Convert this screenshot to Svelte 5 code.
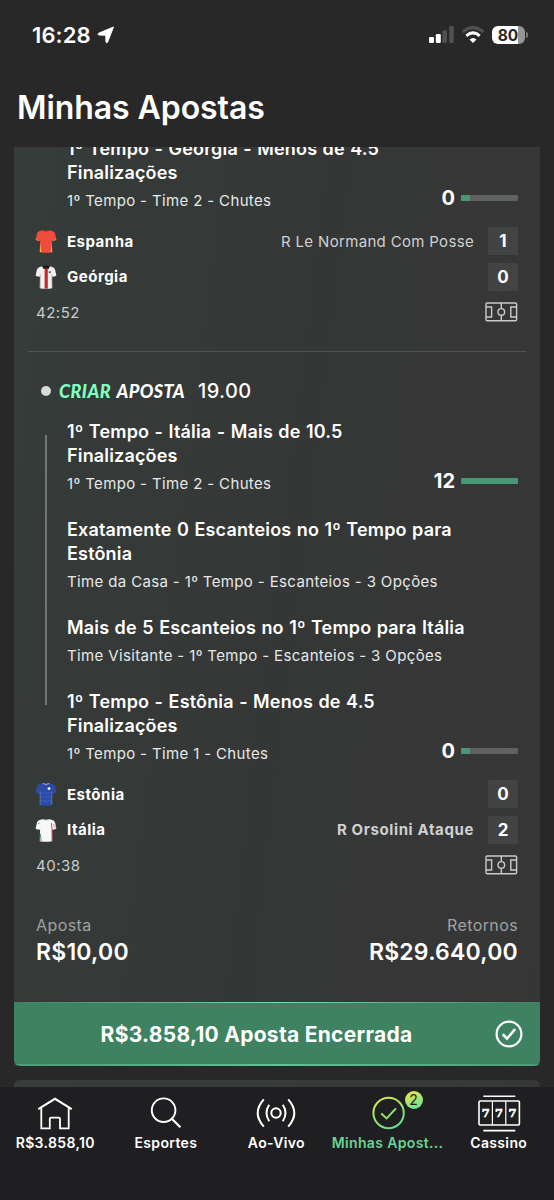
<script lang="ts">
	type Selection = { title: string[]; market: string; count?: number; progress?: number };
	type Team = { name: string; kit: string; score: number; play?: string; strong?: boolean };

	const georgia: Selection = {
		title: ['1º Tempo - Geórgia - Menos de 4.5', 'Finalizações'],
		market: '1º Tempo - Time 2 - Chutes',
		count: 0,
		progress: 15
	};

	const selections: Selection[] = [
		{
			title: ['1º Tempo - Itália - Mais de 10.5', 'Finalizações'],
			market: '1º Tempo - Time 2 - Chutes',
			count: 12,
			progress: 100
		},
		{
			title: ['Exatamente 0 Escanteios no 1º Tempo para', 'Estônia'],
			market: 'Time da Casa - 1º Tempo - Escanteios - 3 Opções'
		},
		{
			title: ['Mais de 5 Escanteios no 1º Tempo para Itália'],
			market: 'Time Visitante - 1º Tempo - Escanteios - 3 Opções'
		},
		{
			title: ['1º Tempo - Estônia - Menos de 4.5', 'Finalizações'],
			market: '1º Tempo - Time 1 - Chutes',
			count: 0,
			progress: 15
		}
	];

	const firstMatch: Team[] = [
		{ name: 'Espanha', kit: 'spain', score: 1, play: 'R Le Normand Com Posse' },
		{ name: 'Geórgia', kit: 'georgia', score: 0 }
	];

	const secondMatch: Team[] = [
		{ name: 'Estônia', kit: 'estonia', score: 0 },
		{ name: 'Itália', kit: 'italy', score: 2, play: 'R Orsolini Ataque', strong: true }
	];

	const kitColors: Record<string, string> = {
		spain: '#ef4c3b',
		georgia: '#f3f1f0',
		estonia: '#2c4ba6',
		italy: '#f8f8f8'
	};

	const tabs = [
		{ id: 'home', label: 'R$3.858,10' },
		{ id: 'sports', label: 'Esportes' },
		{ id: 'live', label: 'Ao-Vivo' },
		{ id: 'bets', label: 'Minhas Apost...' },
		{ id: 'casino', label: 'Cassino' }
	];
</script>

{#snippet selection(item: Selection)}
	<div class="selection">
		<div class="selection__title">
			{#each item.title as line}
				<div>{line}</div>
			{/each}
		</div>
		<div class="selection__row">
			<span class="selection__market">{item.market}</span>
			{#if item.count !== undefined}
				<div class="stat">
					<span class="stat__count">{item.count}</span>
					<div class="stat__track">
						<div class="stat__fill" style="width: {item.progress}%"></div>
					</div>
				</div>
			{/if}
		</div>
	</div>
{/snippet}

{#snippet shirt(kit: string)}
	<svg class="shirt" width="22" height="24" viewBox="0 0 22 24">
		<path
			d="M7.2 1.2Q11 2.4 14.8 1.2L18 2.3Q19.6 3 20.1 4.8L21.4 10.8L17.6 12L16.9 10.6L17.2 23.2Q11 24.2 4.8 23.2L5.1 10.6L4.4 12L.6 10.8L1.9 4.8Q2.4 3 4 2.3Z"
			fill={kitColors[kit]}
		/>
		{#if kit === 'spain'}
			<path d="M5.2 14L6.4 23.3L4.8 23ZM16.8 14L15.6 23.3L17.2 23Z" fill="#f8b34c" />
			<path d="M7.2 1.2Q11 3.4 14.8 1.2" fill="none" stroke="#a92c2c" />
			<path d="M.7 10.5L4.4 11.7M21.3 10.5L17.6 11.7" stroke="#f49a45" stroke-width=".8" />
		{:else if kit === 'georgia'}
			<path d="M9.6 3H12.8V23.6H9.6Z" fill="#c8292d" />
			<path d="M7 1L11 .6L15 1L13.6 4L11 3.2L8.6 4Z" fill="#1c1717" />
			<path d="M13.8 6.3H15.8V8H13.8Z" fill="#555" />
			<path d="M5.3 9V23M16.8 9V23" stroke="#b9b5b5" stroke-width=".8" />
		{:else if kit === 'estonia'}
			<path
				d="M6 10L8 12L10 10L12 12L14 10L16 12M6 14L8 16L10 14L12 16L14 14L16 16M6 18L8 20L10 18L12 20L14 18L16 20"
				fill="none"
				stroke="#3c61c0"
				stroke-width=".8"
			/>
			<path d="M7.8 1.5Q11 3.4 14.2 1.5" fill="none" stroke="#a9c4ef" stroke-width=".9" />
			<path d="M5.2 9.5V22.8M16.8 9.5V22.8" stroke="#7194ca" stroke-width=".6" />
			<circle cx="14" cy="6.6" r="1.4" fill="#fff" />
		{:else}
			<path d="M16.3 5L17 10V23" fill="none" stroke="#d3505a" stroke-width="1" />
			<path d="M5.4 16L6.2 23M3 6L4.5 5" fill="none" stroke="#469071" stroke-width="1" />
			<path d="M7.5 1.5Q11 3 14.5 1.5" fill="none" stroke="#c0c9c6" stroke-width=".7" />
			<path d="M18 6L20.6 10" stroke="#dd7777" stroke-width=".8" />
		{/if}
	</svg>
{/snippet}

{#snippet scoreboard(teams: Team[], clock: string)}
	<div class="scoreboard">
		{#each teams as team}
			<div class="team">
				{@render shirt(team.kit)}
				<span class="team__name">{team.name}</span>
				{#if team.play}
					<span class="team__play" class:team__play--strong={team.strong}>{team.play}</span>
				{/if}
				<span class="team__score">{team.score}</span>
			</div>
		{/each}
		<div class="clock">
			<span>{clock}</span>
			<svg width="33" height="20" viewBox="0 0 33 20" fill="none" stroke="#c9cac9" stroke-width="1.4">
				<rect x="1" y="1" width="30.6" height="17.8" rx="1.2" />
				<path d="M16.3 1V6.4M16.3 13.2V18.8M1 5H6.6V15H1M31.6 5H25.8V15H31.6" />
				<circle cx="16.3" cy="9.9" r="3.3" />
			</svg>
		</div>
	</div>
{/snippet}

<div class="screen">
	<header class="status">
		<div class="status__time">
			<span>16:28</span>
			<svg width="18" height="18" viewBox="0 0 18 18">
				<path
					d="M16.5 1L10.5 16.3Q9.8 17.3 9 16.2L8.8 9.2L1.8 9Q.3 8.5 1.5 7.3Z"
					fill="#fff"
					stroke="#fff"
					stroke-linejoin="round"
				/>
			</svg>
		</div>
		<div class="status__icons">
			<svg width="25" height="18" viewBox="0 0 25 18">
				<rect x="0" y="11" width="5" height="6" rx="1.3" fill="#fff" />
				<rect x="6.8" y="8" width="5" height="9" rx="1.3" fill="#fff" />
				<rect x="13.4" y="4.2" width="4.6" height="12.8" rx="1.3" fill="#505050" />
				<rect x="20.2" y="0" width="4.6" height="17" rx="1.3" fill="#505050" />
			</svg>
			<svg width="24" height="18" viewBox="0 0 24 18" fill="none">
				<path d="M1.7 6Q12 -2.8 22.3 6" stroke="#505050" stroke-width="3.1" />
				<path d="M5.3 9.8Q12 4 18.7 9.8" stroke="#fff" stroke-width="3" />
				<path d="M8.5 13.4Q12 10.4 15.5 13.4L12 17Z" fill="#fff" />
			</svg>
			<div class="battery"><span>80</span></div>
		</div>
	</header>

	<h1>Minhas Apostas</h1>

	<main>
		<section class="card">
			<div class="bet bet--clipped">
				<div class="selections">
					{@render selection(georgia)}
				</div>
				{@render scoreboard(firstMatch, '42:52')}
			</div>

			<div class="divider"></div>

			<div class="bet">
				<div class="bet__header">
					<span class="dot"></span>
					<span class="builder"><span>CRIAR</span> APOSTA</span>
					<span class="odds">19.00</span>
				</div>
				<div class="selections">
					{#each selections as item}
						{@render selection(item)}
					{/each}
				</div>
				{@render scoreboard(secondMatch, '40:38')}
			</div>

			<div class="totals">
				<div>
					<div class="totals__label">Aposta</div>
					<div class="totals__value">R$10,00</div>
				</div>
				<div class="totals__returns">
					<div class="totals__label">Retornos</div>
					<div class="totals__value">R$29.640,00</div>
				</div>
			</div>

			<div class="cashout">
				<span>R$3.858,10 Aposta Encerrada</span>
				<svg width="28" height="28" viewBox="0 0 28 28" fill="none" stroke="#fff">
					<circle cx="14" cy="14" r="12.4" stroke-width="2.2" />
					<path d="M7.7 14.3L12 18.5L20.2 9.2" stroke-width="2.6" />
				</svg>
			</div>
		</section>
		<section class="card card--next"></section>
	</main>

	<nav>
		{#each tabs as tab}
			<div class="tab" class:tab--active={tab.id === 'bets'}>
				<div class="tab__icon">
					{#if tab.id === 'home'}
						<svg width="36" height="36" viewBox="0 0 36 36" fill="none" stroke="#fff" stroke-width="1.8">
							<path d="M1.2 14.2L18 3.8L34.8 14.2" stroke-width="2" />
							<path d="M4.3 12.5V33.3H12.8V24Q12.8 22.6 14.2 22.6H21.6Q23 22.6 23 24V33.3H31.7V12.5" />
						</svg>
					{:else if tab.id === 'sports'}
						<svg width="36" height="36" viewBox="0 0 36 36" fill="none" stroke="#fff" stroke-width="1.9">
							<circle cx="15.6" cy="15.2" r="11.8" />
							<path d="M23.8 23.7L32.4 32.2" stroke-width="2.2" />
						</svg>
					{:else if tab.id === 'live'}
						<svg width="42" height="36" viewBox="0 0 42 36" fill="none" stroke="#fff" stroke-width="2">
							<circle cx="21" cy="18" r="4.7" />
							<path
								d="M14.2 9.8Q8.8 18 14.2 26.2M27.8 9.8Q33.2 18 27.8 26.2M8.8 4.4Q-3.4 18 8.8 31.6M33.2 4.4Q45.4 18 33.2 31.6"
							/>
						</svg>
					{:else if tab.id === 'bets'}
						<svg width="36" height="36" viewBox="0 0 36 36" fill="none" stroke="url(#lime)">
							<defs>
								<linearGradient id="lime" gradientUnits="userSpaceOnUse" x1="6" y1="2" x2="22" y2="34">
									<stop offset="0" stop-color="#e5e84c" />
									<stop offset=".55" stop-color="#8fe86a" />
									<stop offset="1" stop-color="#62dc94" />
								</linearGradient>
							</defs>
							<circle cx="18.6" cy="18" r="15.2" stroke-width="2" />
							<path d="M11.2 18.6L16.6 23.4L26 13.4" stroke-width="2" />
						</svg>
						<span class="badge">2</span>
					{:else}
						<svg width="44" height="38" viewBox="0 0 44 38" fill="none" stroke="#fff" stroke-width="1.6">
							<path d="M6.3 2.3H38.3M6.3 36.6H38.3" />
							<rect x="2" y="7" width="40.4" height="24" rx="1.2" />
							<path d="M15.4 7V31M28.8 7V31" stroke-width="1.2" />
							{#each [8.8, 22.1, 35.4] as x}
								<text {x} y="23.4" text-anchor="middle" fill="#fff" stroke-width=".6">7</text>
							{/each}
						</svg>
					{/if}
				</div>
				<span class="tab__label">{tab.label}</span>
			</div>
		{/each}
	</nav>
</div>

<style>
	:global(body) {
		background: #282828;
	}

	.screen {
		display: flex;
		flex-direction: column;
		height: 1200px;
		overflow: hidden;
		color: #fff;
		font-family: Inter, sans-serif;
		background: #282828;
	}

	.status {
		display: flex;
		justify-content: space-between;
		align-items: center;
		height: 70px;
		padding: 0 29px 0 32px;
		box-sizing: border-box;
	}

	.status__time {
		display: flex;
		align-items: center;
		gap: 6px;
		font-size: 22px;
		font-weight: 600;
		letter-spacing: 0.1px;
	}

	.status__icons {
		display: flex;
		align-items: center;
		gap: 7px;
	}

	.battery {
		position: relative;
		width: 33px;
		height: 18px;
		border-radius: 6px;
		background: linear-gradient(90deg, #fff 79%, #959595 79%);
		color: #282828;
		font-size: 15.5px;
		font-weight: 700;
		line-height: 19px;
	}

	.battery span {
		display: block;
		width: 32px;
		text-align: center;
	}

	.battery::after {
		content: '';
		position: absolute;
		right: -3px;
		top: 6px;
		width: 2px;
		height: 6px;
		border-radius: 0 3px 3px 0;
		background: #777;
	}

	h1 {
		height: 77px;
		margin: 0;
		padding-left: 17px;
		font-size: 32px;
		font-weight: 600;
		line-height: 76px;
		letter-spacing: -0.07px;
	}

	main {
		height: 940px;
		padding: 0 14px;
		overflow: hidden;
	}

	.card {
		overflow: hidden;
		background: linear-gradient(97deg, #353c39 0%, #353736 50%, #363636 100%);
	}

	.card--next {
		height: 30px;
		margin-top: 14px;
		border-radius: 6px;
		background: linear-gradient(90deg, #363f3b, #353837);
	}

	.bet {
		padding: 0 22px;
	}

	.bet--clipped {
		display: flow-root;
		height: 204px;
	}

	.bet--clipped .selections {
		margin-top: -10px;
	}

	.selections {
		position: relative;
		display: flex;
		flex-direction: column;
		gap: 24px;
		padding-left: 31px;
	}

	.selections::before {
		content: '';
		position: absolute;
		left: 9px;
		top: 15px;
		bottom: 59px;
		width: 2px;
		background: #737675;
	}

	.selection__title {
		font-size: 18px;
		font-weight: 600;
		line-height: 24px;
		letter-spacing: 0.17px;
		word-spacing: 0.7px;
		white-space: nowrap;
	}

	.selection__row {
		display: flex;
		justify-content: space-between;
		height: 20px;
		margin-top: 6px;
		line-height: 20px;
	}

	.selection__market {
		color: #e6e8e7;
		font-size: 15px;
		letter-spacing: 0.36px;
	}

	.stat {
		display: flex;
		align-items: center;
		gap: 6px;
		margin-top: -6px;
		font-size: 20px;
		font-weight: 700;
	}

	.stat__track {
		width: 57px;
		height: 6px;
		background: #606161;
		border-radius: 1px;
		overflow: hidden;
	}

	.stat__fill {
		height: 100%;
		background: #469773;
	}

	.scoreboard {
		padding-top: 16px;
	}

	.team {
		display: flex;
		align-items: center;
		height: 28px;
		margin-bottom: 7.5px;
		font-size: 15px;
	}

	.team__name {
		margin-left: 9px;
		font-weight: 700;
		letter-spacing: 0.5px;
	}

	.shirt {
		flex: none;
		margin-left: -1px;
		margin-right: 1px;
	}

	.team__play {
		margin-left: auto;
		color: #cfd0d0;
		letter-spacing: 0.33px;
	}

	.team__play--strong {
		font-weight: 700;
		letter-spacing: 0.62px;
	}

	.team__score {
		width: 30px;
		margin-left: auto;
		background: #424343;
		font-size: 17px;
		font-weight: 700;
		line-height: 28px;
		text-align: center;
	}

	.team__play + .team__score {
		margin-left: 14px;
	}

	.clock {
		display: flex;
		justify-content: space-between;
		align-items: center;
		height: 28px;
		color: #c9cbca;
		font-size: 15px;
		letter-spacing: 0.5px;
	}

	.divider {
		height: 1px;
		margin: 0 14px;
		background: #505453;
	}

	.bet__header {
		display: flex;
		align-items: center;
		height: 24px;
		padding: 27px 0 17px 5px;
		white-space: nowrap;
	}

	.dot {
		width: 10px;
		height: 10px;
		border-radius: 50%;
		background: #d8dad9;
	}

	.builder {
		margin-left: 8px;
		font-family: Lato, sans-serif;
		font-size: 18px;
		font-style: italic;
		font-weight: 900;
		letter-spacing: 0.4px;
		word-spacing: 1.8px;
	}

	.builder span {
		color: #80ffc1;
	}

	.odds {
		margin-left: 13px;
		font-size: 20px;
		font-weight: 500;
		letter-spacing: 0.35px;
	}

	.totals {
		display: flex;
		justify-content: space-between;
		height: 88px;
		margin-top: 35px;
		padding: 0 22px;
	}

	.totals__returns {
		text-align: right;
	}

	.totals__label {
		color: #a0a2a1;
		font-size: 16px;
		line-height: 22px;
		letter-spacing: 0.4px;
	}

	.totals__value {
		font-size: 23px;
		font-weight: 600;
		line-height: 32px;
		letter-spacing: 0.22px;
	}

	.cashout {
		position: relative;
		display: flex;
		align-items: center;
		justify-content: center;
		height: 64px;
		padding-right: 41px;
		box-sizing: border-box;
		border-radius: 0 0 6px 6px;
		background:
			linear-gradient(90deg, #3e8262, #75e0ac 50%, #3e8262) top / 100% 1px no-repeat,
			linear-gradient(90deg, #4c9c76, #5fc394 50%, #4c9c76) bottom / 100% 2px no-repeat,
			#3e8262;
		font-size: 21px;
		font-weight: 700;
		letter-spacing: 0.27px;
	}

	.cashout svg {
		position: absolute;
		right: 17px;
		top: 18px;
	}

	nav {
		display: grid;
		grid-template-columns: repeat(5, 1fr);
		height: 113px;
		background: #1f1f21;
	}

	.tab {
		display: flex;
		flex-direction: column;
		align-items: center;
	}

	.tab__icon {
		position: relative;
		display: flex;
		align-items: center;
		justify-content: center;
		height: 36px;
		margin-top: 8px;
	}

	.tab__icon text {
		font: 700 11.5px 'DejaVu Serif', serif;
	}

	.tab__label {
		margin-top: 3px;
		font-size: 14px;
		font-weight: 600;
		line-height: 18px;
		letter-spacing: 0.35px;
		white-space: nowrap;
	}

	.tab--active .tab__label {
		color: #69d394;
	}

	.badge {
		position: absolute;
		left: 35px;
		top: -4px;
		width: 18px;
		height: 18px;
		border-radius: 50%;
		background: linear-gradient(160deg, #ebe34d 10%, #65e795 90%);
		color: #1f1f21;
		font-size: 14px;
		line-height: 18px;
		text-align: center;
	}
</style>
